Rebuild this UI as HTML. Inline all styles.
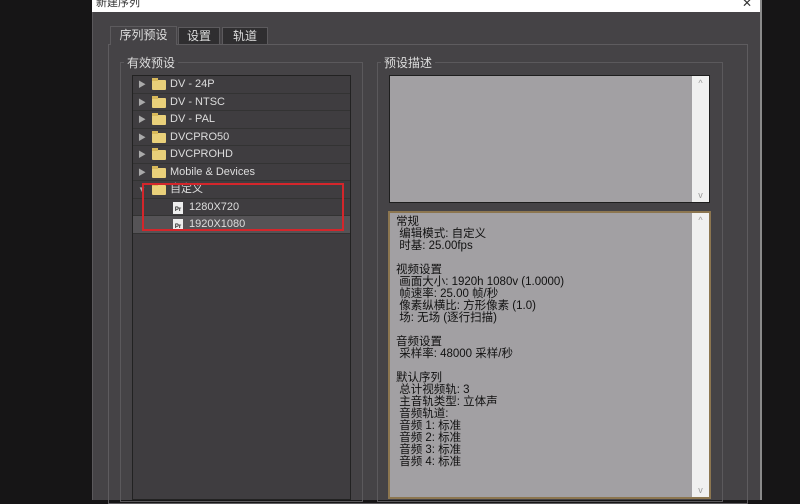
<!DOCTYPE html>
<html><head><meta charset="utf-8"><style>
*{margin:0;padding:0;box-sizing:border-box}
body{width:800px;height:500px;background:#161516;position:relative;overflow:hidden;font-family:"Liberation Sans","Noto Sans CJK SC",sans-serif;}
.a{position:absolute}
.dlg{left:92px;top:0;width:670px;height:500px;background:#454346;border-left:1px solid #5a585b;border-right:2px solid #8a8a8a}
.title{left:92px;top:0;width:668px;height:12px;background:#fff;color:#333;font-size:11px;line-height:6px;padding-left:4px;overflow:hidden}
.tab{top:27px;height:18px;font-size:12px;color:#ddd;text-align:center;line-height:17px;background:#2f2e30;border:1px solid #5c5a5d}
.grp{border:1px solid #5b595c}
.lbl{font-size:12px;color:#ddd;background:#454346;padding:0 3px}
.tree{left:132px;top:75px;width:219px;height:425px;background:#3f3d40;border:1px solid #222}
.row{position:absolute;left:0;width:217px;height:17.5px;border-bottom:1px solid #333;font-size:11px;color:#ddd;line-height:17px}
.row .tri{position:absolute;left:5px;top:0;font-size:8px;color:#aaa}
.fold{position:absolute;left:19px;top:4px;width:14px;height:10px;background:#e9d07a;border-radius:1px}
.fold:before{content:"";position:absolute;left:0;top:-2px;width:6px;height:3px;background:#d8b95a}
.row .t{position:absolute;left:37px}
.pr{position:absolute;left:40px;top:3px;width:10px;height:12px;background:#eee;font-size:6px;color:#222;font-weight:bold;line-height:16px;text-align:center}
.desc{font-size:11.5px;line-height:12px;color:#111;white-space:pre;padding:3px 0 0 6px}
.sb{position:absolute;right:0;top:0;width:17px;height:100%;background:#f0f0f0;color:#999;font-size:9px;text-align:center}
</style></head><body>
<div class="a dlg"></div>
<div class="a title">新建序列</div>
<div class="a" style="left:742px;top:0;font-size:12px;color:#333;line-height:6px">✕</div>
<div class="a grp" style="left:108px;top:44px;width:640px;height:460px;border-color:#5e5c5f"></div>
<div class="a tab" style="left:110px;top:26px;width:67px;height:19px;background:#454346;border-bottom:none">序列预设</div>
<div class="a tab" style="left:178px;width:42px">设置</div>
<div class="a tab" style="left:222px;width:46px">轨道</div>

<div class="a grp" style="left:120px;top:62px;width:243px;height:440px"></div>
<div class="a lbl" style="left:124px;top:54px">有效预设</div>
<div class="a tree">
<div class="row" style="top:0"><span class="tri">▶</span><span class="fold"></span><span class="t">DV - 24P</span></div>
<div class="row" style="top:17.5px"><span class="tri">▶</span><span class="fold"></span><span class="t">DV - NTSC</span></div>
<div class="row" style="top:35px"><span class="tri">▶</span><span class="fold"></span><span class="t">DV - PAL</span></div>
<div class="row" style="top:52.5px"><span class="tri">▶</span><span class="fold"></span><span class="t">DVCPRO50</span></div>
<div class="row" style="top:70px"><span class="tri">▶</span><span class="fold"></span><span class="t">DVCPROHD</span></div>
<div class="row" style="top:87.5px"><span class="tri">▶</span><span class="fold"></span><span class="t">Mobile &amp; Devices</span></div>
<div class="row" style="top:105px"><span class="tri">▼</span><span class="fold"></span><span class="t">自定义</span></div>
<div class="row" style="top:122.5px"><span class="pr">Pr</span><span class="t" style="left:56px">1280X720</span></div>
<div class="row" style="top:140px;background:#555356"><span class="pr">Pr</span><span class="t" style="left:56px">1920X1080</span></div>
</div>
<div class="a" style="left:142px;top:183px;width:202px;height:48px;border:2px solid #d4262b"></div>

<div class="a grp" style="left:377px;top:62px;width:346px;height:440px"></div>
<div class="a lbl" style="left:381px;top:54px">预设描述</div>
<div class="a" style="left:389px;top:75px;width:321px;height:128px;background:#a2a0a3;border:1px solid #1e1e1e"><div class="sb"><div style="margin-top:2px">^</div><div style="position:absolute;bottom:2px;width:100%">v</div></div></div>
<div class="a" style="left:388px;top:211px;width:323px;height:288px;background:#a2a0a3;border:2px solid #8c7650"><div class="sb"><div style="margin-top:2px">^</div><div style="position:absolute;bottom:2px;width:100%">v</div></div>
<div class="desc">常规
 编辑模式: 自定义
 时基: 25.00fps

视频设置
 画面大小: 1920h 1080v (1.0000)
 帧速率: 25.00 帧/秒
 像素纵横比: 方形像素 (1.0)
 场: 无场 (逐行扫描)

音频设置
 采样率: 48000 采样/秒

默认序列
 总计视频轨: 3
 主音轨类型: 立体声
 音频轨道:
 音频 1: 标准
 音频 2: 标准
 音频 3: 标准
 音频 4: 标准</div></div>
</body></html>
